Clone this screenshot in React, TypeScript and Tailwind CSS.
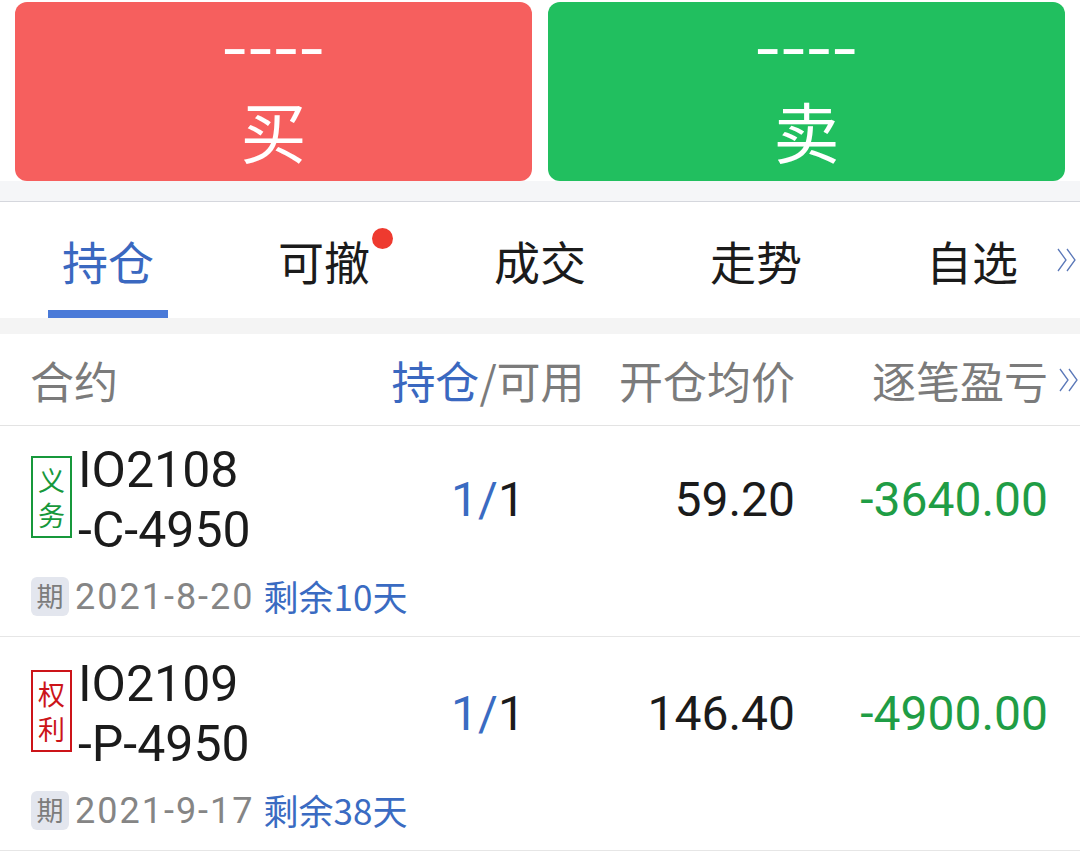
import React from "react"

const cjk = "font-['Noto_Sans_CJK_SC',sans-serif]"
const num = "font-['Roboto','Noto_Sans_CJK_SC',sans-serif]"
const tagFont = "font-['Liberation_Sans','Noto_Sans_CJK_SC',sans-serif]"

function DoubleChevron({ className }: { className?: string }) {
  return (
    <svg viewBox="0 0 22 26" className={className} fill="none" stroke="currentColor" strokeWidth="1.3">
      <path d="M2 2 L10 13 L2 24" />
      <path d="M11 2 L19 13 L11 24" />
    </svg>
  )
}

function TradeButton({ color, label }: { color: string; label: string }) {
  return (
    <div className={`flex-1 h-[179px] rounded-[12px] ${color} flex flex-col items-center text-white`}>
      <div className="mt-[28px] h-[44px] flex items-center justify-center">
        <span className={`${num} inline-block text-[52px] leading-none font-medium scale-x-[1.45] -translate-y-[2px]`}>----</span>
      </div>
      <span className={`${cjk} mt-[22px] text-[66px] leading-none`}>{label}</span>
    </div>
  )
}

const tabs = ["持仓", "可撤", "成交", "走势", "自选"]

type Position = {
  tag: [string, string]
  tagColor: string
  code: string
  side: string
  avg: string
  pnl: string
  date: string
  left: string
  pt: string
}

const positions: Position[] = [
  {
    tag: ["义", "务"],
    tagColor: "border-[#17983b] text-[#17983b]",
    code: "IO2108",
    side: "-C-4950",
    avg: "59.20",
    pnl: "-3640.00",
    date: "2021-8-20",
    left: "剩余10天",
    pt: "pt-[14px]",
  },
  {
    tag: ["权", "利"],
    tagColor: "border-[#cc1419] text-[#cc1419]",
    code: "IO2109",
    side: "-P-4950",
    avg: "146.40",
    pnl: "-4900.00",
    date: "2021-9-17",
    left: "剩余38天",
    pt: "pt-[17px]",
  },
]

function PositionRow({ p }: { p: Position }) {
  return (
    <div className={`${p.pt} pb-[20px] pl-[31px] border-b border-[#e6e6e6]`}>
      <div className="flex items-center">
        <div className="w-[360px] flex items-start">
          <div className={`mt-[16px] w-[41px] h-[82px] pt-[5px] border-2 ${p.tagColor} flex items-center justify-center ${tagFont} text-[27px] leading-[35px] text-center`}>
            <span>
              {p.tag[0]}
              <br />
              {p.tag[1]}
            </span>
          </div>
          <div className={`${num} ml-[6px] text-[50px] leading-[60px] text-[#1b1b1b]`}>
            <div>{p.code}</div>
            <div>{p.side}</div>
          </div>
        </div>
        <div className={`${num} w-[194px] text-center text-[48px] leading-[60px]`}>
          <span className="text-[#3a6bc2]">1/</span>
          <span className="text-[#1b1b1b]">1</span>
        </div>
        <div className={`${num} w-[210px] text-right text-[48px] leading-[60px] text-[#1b1b1b]`}>{p.avg}</div>
        <div className={`${num} w-[253px] text-right text-[48px] leading-[60px] text-[#1f9d45]`}>{p.pnl}</div>
      </div>
      <div className="mt-[17px] flex items-center h-[39px]">
        <span className={`${cjk} w-[38px] h-[39px] rounded-[6px] bg-[#e3e6ee] text-[#7c7c7c] text-[27px] flex items-center justify-center`}>期</span>
        <span className={`${num} ml-[6px] text-[36px] tracking-[2px] text-[#858585]`}>{p.date}</span>
        <span className={`${cjk} ml-[9px] text-[35px] text-[#3a6bc2]`}>{p.left}</span>
      </div>
    </div>
  )
}

export default function App() {
  return (
    <div className={`w-[1080px] h-[866px] bg-white overflow-hidden ${cjk}`}>
      {/* buy / sell */}
      <div className="flex gap-[16px] px-[15px] pt-[2px]">
        <TradeButton color="bg-[#f65f5e]" label="买" />
        <TradeButton color="bg-[#21bf5f]" label="卖" />
      </div>
      <div className="h-[21px] bg-[#f5f6f8] border-b border-[#d5d7dd]" />

      {/* tabs */}
      <div className="relative flex h-[116px]">
        {tabs.map((t, i) => (
          <div key={t} className="relative w-[216px] flex items-center justify-center">
            <span className={`relative text-[46px] leading-none ${i === 0 ? "text-[#3a68c0]" : "text-[#1b1b1b]"}`}>
              {t}
              {t === "可撤" && (
                <span className="absolute left-full ml-[2px] top-[-9px] w-[21px] h-[21px] rounded-full bg-[#ee3a2f]" />
              )}
            </span>
            {i === 0 && <div className="absolute bottom-0 w-[120px] h-[8px] bg-[#4a7ad8]" />}
          </div>
        ))}
        <DoubleChevron className="absolute right-[2px] top-[45px] w-[22px] h-[26px] text-[#5b78b8]" />
      </div>
      <div className="h-[16px] bg-[#f4f4f4]" />

      {/* header */}
      <div className="flex items-center h-[92px] pl-[30px] border-b border-[#e3e3e3] text-[44px] text-[#7b7b7b]">
        <div className="w-[361px]">合约</div>
        <div className="w-[194px] text-center whitespace-nowrap">
          <span className="text-[#3a68c0]">持仓</span>/可用
        </div>
        <div className="w-[210px] text-right">开仓均价</div>
        <div className="w-[253px] text-right">逐笔盈亏</div>
        <DoubleChevron className="ml-[10px] w-[22px] h-[26px] text-[#5b78b8]" />
      </div>

      {positions.map((p) => (
        <PositionRow key={p.code} p={p} />
      ))}
    </div>
  )
}
